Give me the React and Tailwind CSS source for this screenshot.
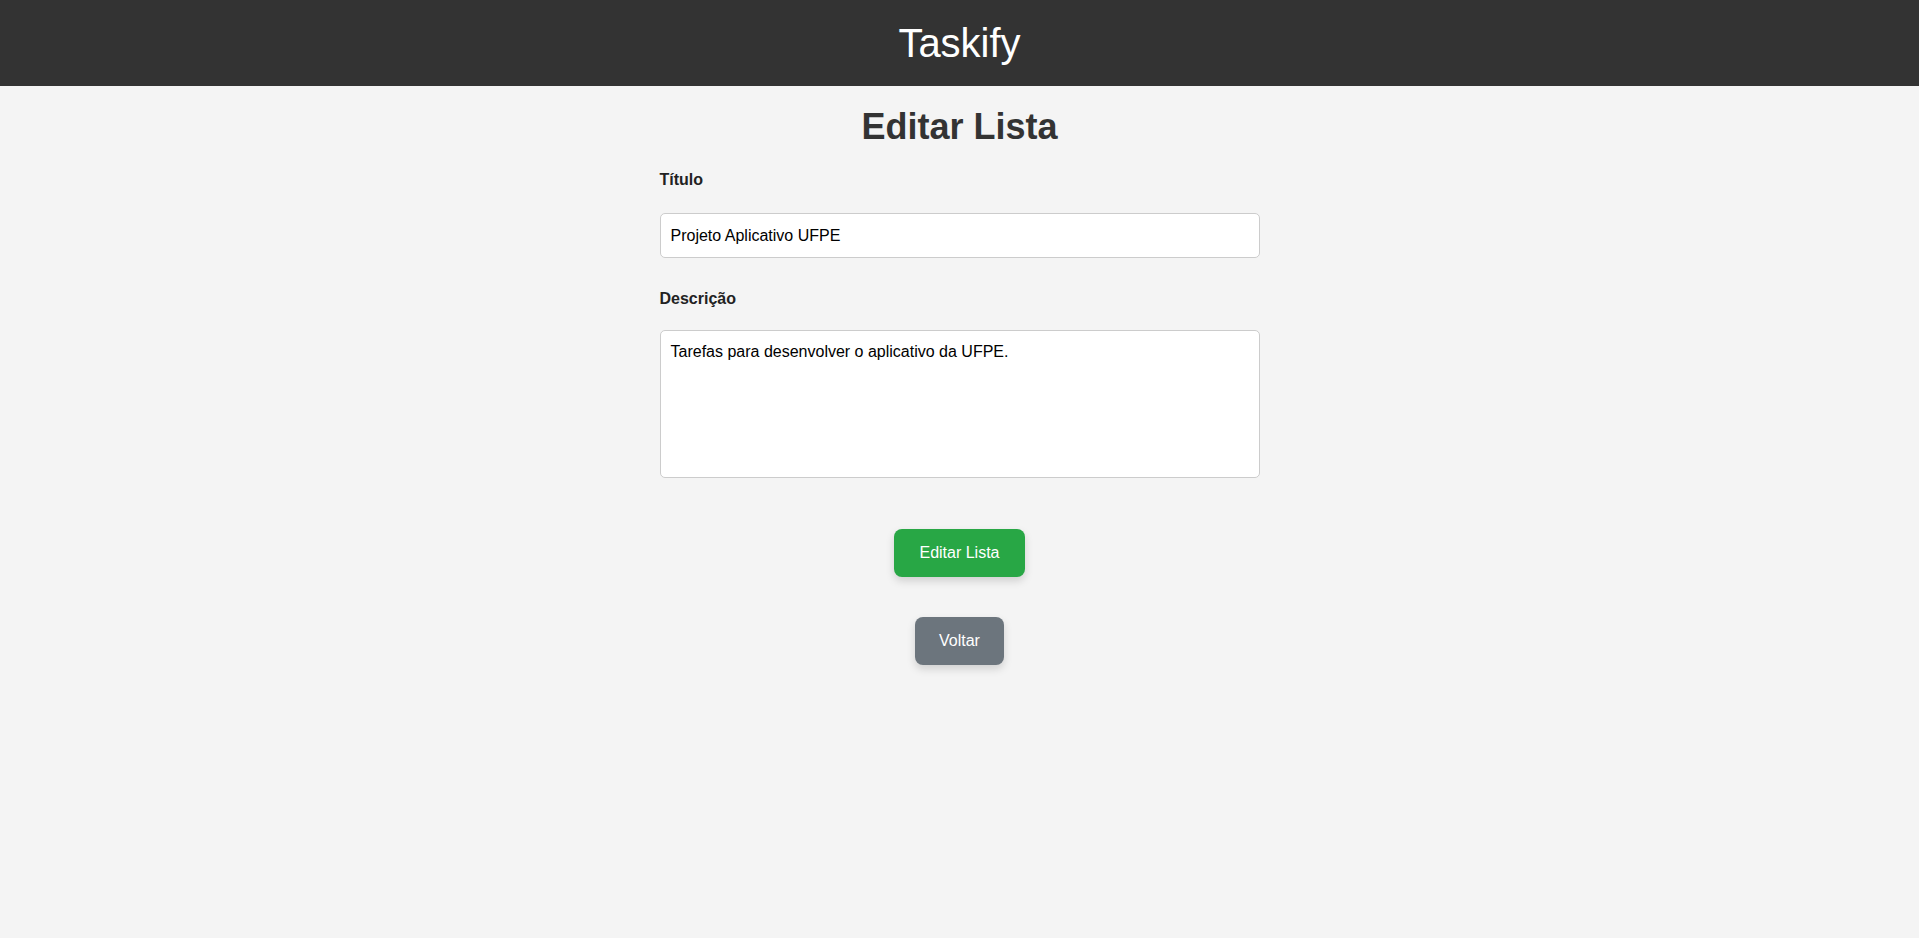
import React, { useState } from 'react';

const App = () => {
  const [titulo, setTitulo] = useState('Projeto Aplicativo UFPE');
  const [descricao, setDescricao] = useState('Tarefas para desenvolver o aplicativo da UFPE.');

  return (
    <div className="min-h-screen bg-[#f4f4f4] font-['Liberation_Sans',Arial,sans-serif] text-[#333]">
      <header className="bg-[#333] py-5 text-center">
        <h1 className="text-[40px] leading-[46px] text-white">Taskify</h1>
      </header>

      <main className="mx-auto w-[600px] pt-5">
        <h2 className="text-center text-[36px] leading-[41px] font-bold text-[#333]">Editar Lista</h2>

        <form onSubmit={e => e.preventDefault()} className="mt-6">
          <label className="block text-base leading-[18px] font-bold text-[#222]">Título</label>
          <input
            value={titulo}
            onChange={e => setTitulo(e.target.value)}
            className="mt-[24px] block h-[45px] w-full rounded-[5px] border border-[#ccc] bg-white px-[10px] text-base text-black outline-none"
          />

          <label className="mt-8 block text-base leading-[18px] font-bold text-[#222]">Descrição</label>
          <textarea
            value={descricao}
            onChange={e => setDescricao(e.target.value)}
            className="mt-[22px] block h-[148px] w-full resize-none rounded-[5px] border border-[#ccc] bg-white px-[10px] py-[12px] text-base leading-[18px] text-black outline-none"
          />

          <div className="mt-[51px] flex flex-col items-center gap-10">
            <button
              type="submit"
              className="h-[48px] rounded-lg bg-[#28a745] px-[25px] text-base text-white shadow-[0_4px_8px_rgba(0,0,0,0.15)]"
            >
              Editar Lista
            </button>
            <button
              type="button"
              className="h-[48px] rounded-lg bg-[#6c757d] px-[24px] text-base text-white shadow-[0_4px_8px_rgba(0,0,0,0.15)]"
            >
              Voltar
            </button>
          </div>
        </form>
      </main>
    </div>
  );
};

export default App;
